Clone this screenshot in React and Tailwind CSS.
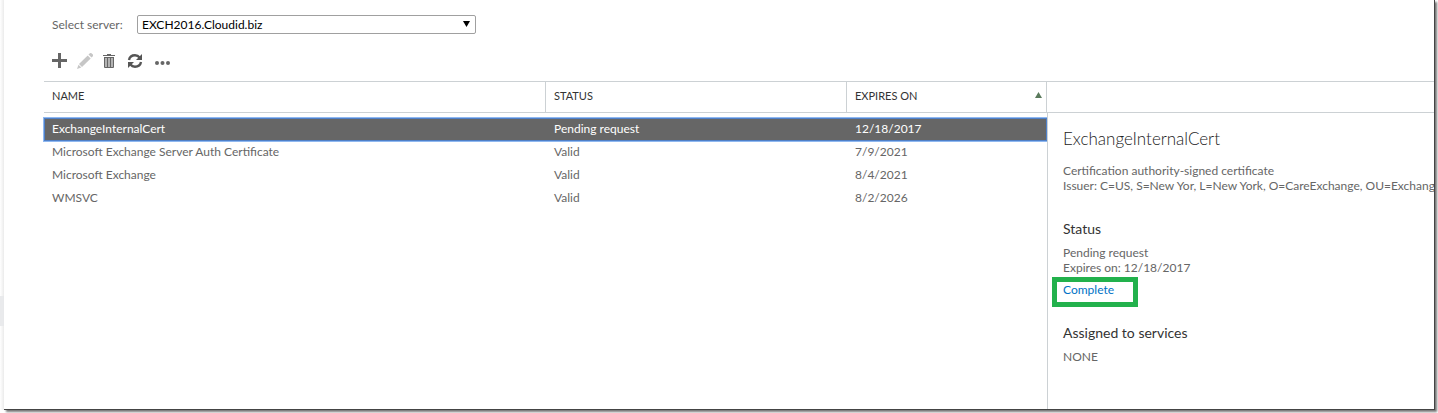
import React, { useState } from 'react';

const servers = ['EXCH2016.Cloudid.biz'];

const certificates = [
  { name: 'ExchangeInternalCert', status: 'Pending request', expires: '12/18/2017' },
  { name: 'Microsoft Exchange Server Auth Certificate', status: 'Valid', expires: '7/9/2021' },
  { name: 'Microsoft Exchange', status: 'Valid', expires: '8/4/2021' },
  { name: 'WMSVC', status: 'Valid', expires: '8/2/2026' },
];

function AddIcon() {
  return (
    <svg width="16" height="16" viewBox="0 0 16 16" fill="#666">
      <path d="M6 0h3v6h6v3H9v6H6V9H0V6h6z" />
    </svg>
  );
}

function EditIcon() {
  return (
    <svg width="16" height="16" viewBox="0 0 16 16" fill="#c6c6c6">
      <path d="M11.5 1.6 12.6.5a1.6 1.6 0 0 1 2.2 0l.8.8a1.6 1.6 0 0 1 0 2.2l-1.1 1.1z" />
      <path d="M10.7 2.4 13.7 5.4 5 14 2 11z" />
      <path d="M1.5 11.8 4.3 14.6 0 16z" />
    </svg>
  );
}

function DeleteIcon() {
  return (
    <svg width="14" height="16" viewBox="0 0 14 16" fill="#666">
      <path d="M5 1h4v1H5zM1 2h12v1H1z" />
      <path
        fillRule="evenodd"
        d="M2 4h10v10a1 1 0 0 1-1 1H3a1 1 0 0 1-1-1zM3.5 5v9h1V5zM6.5 5v9h1V5zM9.5 5v9h1V5z"
      />
    </svg>
  );
}

function RefreshIcon() {
  return (
    <svg width="16" height="16" viewBox="0 0 16 16" fill="none" stroke="#555" strokeWidth="2.4">
      <path d="M2 7C2.6 3.9 5 2.3 8 2.3c2 0 3.5.8 4.6 2.2" />
      <path d="M14 9c-.6 3.1-3 4.7-6 4.7-2 0-3.5-.8-4.6-2.2" />
      <path d="M15 1v6H9z" fill="#555" stroke="none" />
      <path d="M1 15V9h6z" fill="#555" stroke="none" />
    </svg>
  );
}

function MoreIcon() {
  return (
    <svg width="16" height="16" viewBox="0 0 16 16" fill="#666">
      <circle cx="3" cy="10" r="2" />
      <circle cx="8.5" cy="10" r="2" />
      <circle cx="14" cy="10" r="2" />
    </svg>
  );
}

function Toolbar() {
  return (
    <div className="mt-[17px] mb-[10px] flex h-5 items-center gap-[9px] pl-2">
      <button type="button" aria-label="Add"><AddIcon /></button>
      <button type="button" aria-label="Edit" disabled><EditIcon /></button>
      <button type="button" aria-label="Delete"><DeleteIcon /></button>
      <button type="button" aria-label="Refresh" className="ml-0.5"><RefreshIcon /></button>
      <button type="button" aria-label="More" className="ml-0.5"><MoreIcon /></button>
    </div>
  );
}

function CertificateTable({ selected, onSelect }) {
  const th = 'h-[31px] border-r border-b border-[#ccd1d4] px-2 pb-1 text-left font-normal text-[#333]';
  const td = 'h-[23px] px-2 pb-0.5';

  return (
    <table className="w-full table-fixed border-separate border-spacing-0 text-[12px] leading-[15px] text-[#666]">
      <thead className="text-[11px]">
        <tr>
          <th className={th}>NAME</th>
          <th className={`${th} w-[301px]`}>STATUS</th>
          <th className={`${th} w-[200px]`}>
            <div className="flex items-center justify-between">
              EXPIRES ON
              <svg width="7" height="6" viewBox="0 0 7 6" className="-mr-1">
                <path d="M3.5 0 7 6H0z" fill="#5a7a5c" />
              </svg>
            </div>
          </th>
        </tr>
      </thead>
      <tbody className="before:block before:h-[5px] before:content-['']">
        {certificates.map((cert, i) => (
          <tr
            key={cert.name}
            onClick={() => onSelect(i)}
            className={
              i === selected
                ? 'bg-[#666] text-white outline outline-[#8fb8f0] inset-shadow-[0_0_0_1px_#4f80c8]'
                : ''
            }
          >
            <td className={td}>{cert.name}</td>
            <td className={td}>{cert.status}</td>
            <td className={td}>{cert.expires}</td>
          </tr>
        ))}
      </tbody>
    </table>
  );
}

function Details({ cert }) {
  return (
    <aside className="flex w-[387px] shrink-0 flex-col">
      <div className="h-[31px] shrink-0 border-b border-[#ccd1d4]" />
      <div className="flex-1 overflow-hidden border-l border-[#ccd1d4] pt-4 pl-[15px] text-[12px] leading-[15px] whitespace-nowrap text-[#666]">
        <h2 className="text-[17px] leading-5 font-light text-[#222]">{cert.name}</h2>
        <p className="mt-[14px]">Certification authority-signed certificate</p>
        <p>Issuer: C=US, S=New Yor, L=New York, O=CareExchange, OU=Exchange</p>

        <h3 className="mt-[26px] text-[14px] leading-5 text-[#333]">Status</h3>
        <p className="mt-[6px]">{cert.status}</p>
        <p>Expires on: {cert.expires}</p>
        <a href="#complete" className="relative mt-[7px] inline-block text-[#0072c6]">
          Complete
          <span className="absolute -top-[5px] -left-[11px] h-[30px] w-[86px] border-[5px] border-[#22b14c]" />
        </a>

        <h3 className="mt-[26px] text-[14px] leading-5 text-[#333]">Assigned to services</h3>
        <p className="mt-[6px]">NONE</p>
      </div>
    </aside>
  );
}

export default function App() {
  const [selected, setSelected] = useState(0);

  return (
    <div className="flex min-h-screen overflow-hidden bg-white pr-[3px] pb-[3px] font-[Lato,sans-serif]">
      <div className="w-1 shrink-0 bg-linear-to-r from-white to-[#ececec]">
        <div className="mt-[296px] h-[30px] bg-[#e9eaec]" />
      </div>
      <main className="flex min-w-0 flex-1 flex-col border-r border-b border-[#444] bg-white pt-[15px] pl-10 shadow-[2px_2px_2px_#777]">
        <div className="flex h-[19px] items-center pl-2 text-[12px] leading-[15px]">
          <label htmlFor="server" className="w-[85px] text-[#666]">Select server:</label>
          <div className="relative">
            <select
              id="server"
              className="block h-[19px] w-[339px] appearance-none rounded-xs border border-[#a0a0a0] bg-white px-1 text-black"
            >
              {servers.map((server) => (
                <option key={server}>{server}</option>
              ))}
            </select>
            <svg width="7" height="6" viewBox="0 0 7 6" className="pointer-events-none absolute top-[6px] right-[6px]">
              <path d="M0 0h7L3.5 6z" fill="#000" />
            </svg>
          </div>
        </div>

        <Toolbar />

        <div className="flex flex-1 border-t border-[#ccd1d4]">
          <div className="min-w-0 flex-1">
            <CertificateTable selected={selected} onSelect={setSelected} />
          </div>
          <Details cert={certificates[selected]} />
        </div>
      </main>
    </div>
  );
}
